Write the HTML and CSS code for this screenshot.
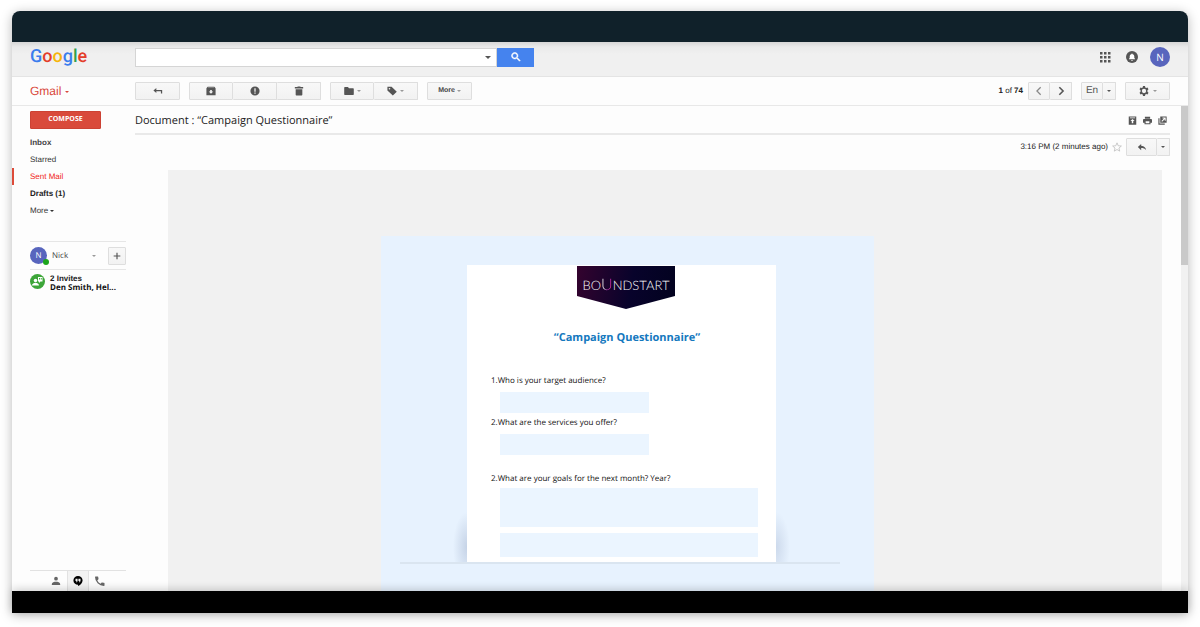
FILE: index.html
```html
<!DOCTYPE html>
<html lang="en">
<head>
<meta charset="utf-8">
<title>Gmail - Campaign Questionnaire</title>
<link rel="stylesheet" href="styles.css">
</head>
<body>
<div class="window">
  <div class="titlebar"></div>
  <header class="header">
    <a class="google" href="#"><span class="g-blue">G</span><span class="g-red">o</span><span class="g-yellow">o</span><span class="g-blue">g</span><span class="g-green">l</span><span class="g-red">e</span></a>
    <form class="search">
      <div class="search-box">
        <input type="text" aria-label="Search mail">
        <button type="button" class="plain" aria-label="Search options"><span class="caret"></span></button>
      </div>
      <button type="button" class="search-go" aria-label="Search"><svg class="icon-l" viewBox="0 0 24 24"><path d="M15.5 14h-.8l-.3-.3A6.500 6.500 0 1 0 13.700 14.400l.3.300v.8l5 5 1.500-1.500zM9.500 14a4.500 4.500 0 1 1 0-9 4.500 4.500 0 0 1 0 9z" stroke="currentColor"/></svg></button>
    </form>
    <div class="account">
      <button type="button" class="plain" aria-label="Apps"><svg class="icon-l" viewBox="0 0 12 12"><path d="M1 1h2.500v2.500H1zM5 1h2.500v2.500H5zM9 1h2.500v2.500H9zM1 5h2.500v2.500H1zM5 5h2.500v2.500H5zM9 5h2.500v2.500H9zM1 9h2.500v2.500H1zM5 9h2.500v2.500H5zM9 9h2.500v2.500H9z"/></svg></button>
      <button type="button" class="plain" aria-label="Notifications"><svg class="icon-l" viewBox="0 0 24 24"><circle cx="12" cy="12" r="12"/><path fill="#fff" d="M12 19.500a1.700 1.700 0 0 0 1.700-1.700h-3.400A1.700 1.700 0 0 0 12 19.500zm6-4-1.400-1.400V11c0-2.300-1.200-4-3.400-4.500V6a1.200 1.200 0 0 0-2.400 0v.5C8.600 7 7.400 8.700 7.400 11v3.100L6 15.500v1.200h12z"/></svg></button>
      <button type="button" class="avatar" aria-label="Account">N</button>
    </div>
  </header>

  <div class="toolbar">
    <a class="gmail" href="#">Gmail <span class="caret caret-small"></span></a>
    <div class="tools">
      <button type="button" class="btn" aria-label="Back"><svg class="icon-m" viewBox="0 0 12 12"><path d="M.5 5.500 4 2.500v2.300h7V9H9.500V6.300H4v2.200z"/></svg></button>
      <div class="group">
        <button type="button" class="btn" aria-label="Archive"><svg class="icon-m" viewBox="0 0 24 24"><path fill-rule="evenodd" d="M4 2h16l3 3.500V22H1V5.500zM10 9.500V13H6.500l5.500 5.500 5.500-5.500H14V9.500zM4.500 5h15l-.8-1H5.300z"/></svg></button>
        <button type="button" class="btn" aria-label="Report spam"><svg class="icon-m" viewBox="0 0 24 24"><path fill-rule="evenodd" d="M12 1a11 11 0 1 0 0 22 11 11 0 0 0 0-22zm-1.500 4.500h3v8h-3zm0 10h3v3h-3z"/></svg></button>
        <button type="button" class="btn" aria-label="Delete"><svg class="icon-m" viewBox="0 0 24 24"><path d="M4 20.500C4 22 5 23 6.500 23h11c1.500 0 2.500-1 2.500-2.500V8H4zM22 2.500h-6L15 1H9L8 2.500H2V6h20z"/></svg></button>
      </div>
      <div class="group">
        <button type="button" class="btn" aria-label="Move to"><svg class="icon-m" viewBox="0 0 24 24"><path d="M9.500 2.500H2C1 2.500.5 3.500.5 4.500v15c0 1 .5 2 1.500 2h20c1 0 1.500-1 1.500-2V7.500c0-1-.5-2-1.500-2H12z"/></svg><span class="caret caret-small caret-pale"></span></button>
        <button type="button" class="btn" aria-label="Labels"><svg class="icon-m" viewBox="0 0 24 24"><path fill-rule="evenodd" d="M1 2v9l13 12 9.500-9L11 2zm5 2.500a2 2 0 1 1 0 4 2 2 0 0 1 0-4z"/></svg><span class="caret caret-small caret-pale"></span></button>
      </div>
      <button type="button" class="btn btn-more">More<span class="caret caret-small caret-pale"></span></button>
    </div>
    <div class="tools tools-right">
      <div class="pager">
        <span class="count"><b>1</b> of <b>74</b></span>
        <div class="group">
          <button type="button" class="btn btn-half" aria-label="Newer"><svg class="icon-m pale" viewBox="0 0 12 12"><path d="M8 1.500 3.500 6 8 10.500" fill="none" stroke="currentColor" stroke-width="1.500"/></svg></button>
          <button type="button" class="btn btn-half" aria-label="Older"><svg class="icon-m" viewBox="0 0 12 12"><path d="M4 1.500 8.500 6 4 10.500" fill="none" stroke="currentColor" stroke-width="1.900"/></svg></button>
        </div>
      </div>
      <div class="group">
        <button type="button" class="btn btn-lang">En</button>
        <button type="button" class="btn btn-drop" aria-label="Input tools"><span class="caret caret-small"></span></button>
      </div>
      <button type="button" class="btn" aria-label="Settings"><svg class="icon-l" viewBox="0 0 24 24"><path fill-rule="evenodd" d="M10 2h4l.6 2.800 1.700 1 2.700-.9 2 3.500L18.900 10.300v3.400l2.100 1.900-2 3.500-2.700-.9-1.700 1L14 22h-4l-.6-2.800-1.700-1-2.700.9-2-3.500 2.100-1.900v-3.400L3 8.400l2-3.500 2.700.9 1.700-1zM12 7.700a4.300 4.300 0 1 0 0 8.600 4.300 4.300 0 0 0 0-8.600z"/></svg><span class="caret caret-small caret-pale"></span></button>
    </div>
  </div>

  <div class="body">
    <aside class="sidebar">
      <button type="button" class="compose">COMPOSE</button>
      <nav class="folders">
        <a class="folder unread" href="#">Inbox</a>
        <a class="folder" href="#">Starred</a>
        <a class="folder current" href="#">Sent Mail</a>
        <a class="folder unread dark" href="#">Drafts (1)</a>
        <a class="folder" href="#">More <span class="caret caret-small"></span></a>
      </nav>
      <div class="person">
        <span class="avatar avatar-small">N<span class="online"></span></span>
        <span class="name">Nick</span>
        <span class="caret caret-small caret-pale"></span>
        <button type="button" class="btn btn-plus" aria-label="New conversation"><svg class="icon-m" viewBox="0 0 12 12"><path d="M5.300 2h1.400v3.300H10v1.400H6.700V10H5.300V6.700H2V5.300h3.300z"/></svg></button>
      </div>
      <a class="invites" href="#">
        <svg class="invite-icon" viewBox="0 0 30 30"><circle cx="15" cy="15" r="15" fill="#3da639"/><g fill="#fff"><circle cx="11" cy="13" r="3.500"/><path d="M4 23c0-4 4-5.500 7-5.500s7 1.500 7 5.500zM16 6h9v9h-4l-3 3v-3h-2z"/></g><path fill="#3da639" d="M18 8h2v3h-2zM21.500 8h2v3h-2z"/></svg>
        <span><b>2 Invites</b><b class="who">Den Smith, Hel...</b></span>
      </a>
      <div class="tabs">
        <button type="button" class="tab" aria-label="Contacts"><svg class="icon-m" viewBox="0 0 24 24"><path d="M12 11a4.500 4.500 0 1 0 0-9 4.500 4.500 0 0 0 0 9zm0 2.500c-4 0-10 1.500-10 5.500v2.500h20V19c0-4-6-5.500-10-5.500z"/></svg></button>
        <button type="button" class="tab tab-on" aria-label="Hangouts"><svg class="icon-m" viewBox="0 0 24 24"><path fill-rule="evenodd" d="M12 0a11 10.500 0 0 0 0 21v3c5-2.500 11-7 11-13.500A11 10.500 0 0 0 12 0zM6 6.500h5V12L9.500 15h-2L8.500 12H6zm7 0h5V12L16.500 15h-2l1-3H13z"/></svg></button>
        <button type="button" class="tab" aria-label="Calls"><svg class="icon-l" viewBox="0 0 24 24"><path d="M6.600 10.800a15 15 0 0 0 6.600 6.600l2.200-2.200c.3-.3.700-.4 1-.2 1.100.4 2.300.6 3.600.6.600 0 1 .4 1 1V21c0 .6-.4 1-1 1A18 18 0 0 1 2 4c0-.6.400-1 1-1h4.500c.6 0 1 .4 1 1 0 1.300.2 2.500.6 3.600.1.300 0 .7-.3 1z"/></svg></button>
      </div>
    </aside>

    <main class="mail">
      <div class="subject">
        <h1>Document : “Campaign Questionnaire”</h1>
        <div class="subject-tools">
          <button type="button" class="plain" aria-label="Collapse"><svg class="icon-s" viewBox="0 0 24 24"><path fill-rule="evenodd" d="M2 1h20v22H2zm3 3v2h14V4zm7 4L6.500 13.500H10V19h4v-5.500h3.500z"/></svg></button>
          <button type="button" class="plain" aria-label="Print"><svg class="icon-s" viewBox="0 0 24 24"><path fill-rule="evenodd" d="M5 2h14v5H5zM3 8h18c1.500 0 3 1 3 2.500V18h-4v4H4v-4H0v-7.500C0 9 1.500 8 3 8zm4 6v5.500h10V14z"/></svg></button>
          <button type="button" class="plain" aria-label="Open in new window"><svg class="icon-s" viewBox="0 0 24 24"><path fill-rule="evenodd" d="M6 1h17v17H6zm6 3v2.500h4L9 13l2 2 7-6.500v4h2.500V4zM1 6h3v14h14v3H1z"/></svg></button>
        </div>
      </div>
      <div class="meta">
        <time>3:16 PM (2 minutes ago)</time>
        <button type="button" class="plain star" aria-label="Star"><svg class="icon-m" viewBox="0 0 24 24"><path fill="none" stroke="currentColor" stroke-width="1.800" d="m12 2 2.900 7 7.600.6-5.800 4.900 1.800 7.400L12 18l-6.500 3.900 1.800-7.400L1.500 9.600 9.100 9z"/></svg></button>
        <div class="group">
          <button type="button" class="btn btn-reply" aria-label="Reply"><svg class="icon-m" viewBox="0 0 24 24"><path d="M10 9V4.500L2 12l8 7.500v-5c5 0 9 1 12 5-1-5.500-4-10-12-10.500z"/></svg></button>
          <button type="button" class="btn btn-drop" aria-label="More actions"><span class="caret caret-small"></span></button>
        </div>
      </div>
      <div class="message">
        <div class="letter">
          <div class="shelf">
            <form class="paper">
              <div class="brand">BO<span class="brand-u">U</span>NDSTART</div>
              <h2>“Campaign Questionnaire”</h2>
              <label for="q1">1.Who is your target audience?</label>
              <input id="q1" class="short" type="text">
              <label for="q2">2.What are the services you offer?</label>
              <input id="q2" class="short" type="text">
              <label for="q3" class="spaced">2.What are your goals for the next month? Year?</label>
              <textarea id="q3" class="long"></textarea>
              <input class="last" type="text" aria-label="Goals for the year">
            </form>
          </div>
        </div>
      </div>
    </main>
    <div class="scrollbar"><div class="thumb"></div></div>
  </div>
  <div class="footbar"></div>
</div>
</body>
</html>
```

FILE: styles.css
```css
* { box-sizing: border-box; }

body {
  margin: 0;
  background: #fff;
  color: #222;
  font: 8px/12px "Liberation Sans", Arial, sans-serif;
  text-rendering: geometricPrecision;
}

a { color: inherit; text-decoration: none; }
button, input, textarea { font: inherit; color: inherit; margin: 0; padding: 0; border: 0; border-radius: 0; outline: 0; text-rendering: inherit; }
button { cursor: pointer; }
svg { display: block; fill: currentColor; flex: none; }
h1, h2 { margin: 0; font-family: "Open Sans", sans-serif; }

.window {
  display: flex;
  flex-direction: column;
  min-height: calc(100vh - 25px);
  margin: 11px 12px 14px;
  border-radius: 8px 8px 0 0;
  background: #fdfdfd;
  box-shadow: 0 2px 12px rgba(0, 0, 0, .28);
}

.titlebar { height: 31px; border-radius: 8px 8px 0 0; background: #10212a; }
.footbar { height: 22px; background: #000; box-shadow: 0 -2px 8px rgba(0, 0, 0, .18); z-index: 1; }

.icon-s { width: 9px; height: 9px; }
.icon-m { width: 10px; height: 10px; }
.icon-l { width: 12px; height: 12px; }
.pale { color: #888; }
.plain { display: flex; align-items: center; background: none; }

.caret {
  display: inline-block;
  border: 3px solid transparent;
  border-top-color: currentColor;
  border-bottom: 0;
}
.caret-small { border-width: 2px; border-bottom: 0; vertical-align: middle; }
.caret-pale { color: #999; }

/* Header */
.header {
  display: flex;
  align-items: center;
  height: 35px;
  padding: 0 18px 4px;
  border-bottom: 1px solid #e4e4e4;
  background: linear-gradient(#d6d6d6, #eaeaea 5px, #f0f0f0 12px);
}
.google { width: 105px; font: 500 18px/24px Roboto, sans-serif; }
.g-blue { color: #3b7ded; }
.g-red { color: #e33e2b; }
.g-yellow { color: #f6b50b; }
.g-green { color: #2ea14e; }

.search { display: flex; flex: 0 1 399px; height: 19px; }
.search-box { display: flex; flex: 1; padding-right: 5px; border: 1px solid #d5d5d5; background: #fff; color: #555; }
.search-box input { flex: 1; min-width: 0; background: none; }
.search-go { display: grid; place-items: center; width: 37px; background: #4583ee; color: #fff; }

.account { display: flex; align-items: center; gap: 15px; margin-left: auto; color: #555; }
.avatar {
  display: grid;
  place-items: center;
  width: 20px;
  height: 20px;
  margin-left: -3px;
  border-radius: 50%;
  background: #5865bd;
  color: #fff;
  font: 10px/12px "Open Sans", sans-serif;
}

/* Toolbar */
.toolbar {
  display: flex;
  align-items: center;
  height: 29px;
  padding: 0 18px;
  border-bottom: 1px solid #e8e8e8;
}
.gmail { width: 105px; color: #d9483b; font-size: 12px; line-height: 16px; }
.tools { display: flex; gap: 9px; }
.tools-right { margin-left: auto; }
.group { display: flex; }
.group .btn + .btn { border-left: 0; }
.btn {
  display: flex;
  align-items: center;
  justify-content: center;
  gap: 3px;
  width: 45px;
  height: 18px;
  border: 1px solid #dedede;
  border-radius: 1px;
  background: linear-gradient(#f8f8f8, #f2f2f2);
  color: #555;
}
.group .btn { width: 44px; }
.btn-more { gap: 2px; color: #444; font-size: 7px; font-weight: bold; }
.pager { display: flex; align-items: center; gap: 5px; }
.group .btn-half { width: 22px; }
.group .btn-lang { width: 22px; font-size: 10px; }
.group .btn-drop { width: 13px; }
.group .btn-reply { width: 31px; }

/* Body */
.body { display: flex; flex: 1; }

.sidebar { display: flex; flex-direction: column; flex: none; width: 123px; padding: 5px 9px 0 18px; }
.compose {
  width: 71px;
  height: 18px;
  border: 1px solid #cc4234;
  border-radius: 1px;
  background: #d94a3b;
  color: #fff;
  font: bold 7px/10px "Open Sans", sans-serif;
}
.folders { margin: 5px 0 22px -18px; }
.folder { display: block; padding-left: 16px; border-left: 2px solid transparent; line-height: 17px; color: #333; }
.unread { font-weight: bold; color: #444; }
.dark { color: #222; }
.current { border-left-color: #dd4b39; color: #f0251b; }

.person {
  display: flex;
  align-items: center;
  height: 29px;
  border: 1px solid #e6e6e6;
  border-width: 1px 0;
}
.avatar-small { position: relative; width: 17px; height: 17px; margin: 0; font-size: 8px; }
.online { position: absolute; right: -2px; bottom: -1px; width: 6px; height: 6px; border-radius: 50%; background: #1ca51c; }
.name { flex: 1; margin-left: 5px; color: #444; font-family: "Open Sans", sans-serif; }
.btn-plus { width: 18px; margin-left: 12px; }

.invites { display: flex; gap: 5px; padding-top: 4px; line-height: 9px; }
.invites b { display: block; white-space: nowrap; }
.invites .who { font-family: "Open Sans", sans-serif; color: #111; }
.invite-icon { width: 15px; height: 15px; }

.tabs { display: flex; justify-content: center; margin-top: auto; border-top: 1px solid #e2e2e2; }
.tab { display: grid; place-items: center; width: 22px; height: 20px; background: none; color: #666; }
.tab-on { border: 1px solid #e2e2e2; border-width: 0 1px; background: #f3f3f3; color: #000; }

.mail { display: flex; flex: 1; flex-direction: column; min-width: 0; padding-right: 11px; }
.subject {
  display: flex;
  align-items: center;
  justify-content: space-between;
  height: 29px;
  padding-top: 2px;
  border-bottom: 2px solid #e9e9e9;
}
.subject h1 { font-size: 11px; font-weight: 400; line-height: 16px; }
.subject-tools { display: flex; gap: 6px; padding-right: 3px; color: #555; }
.meta { display: flex; align-items: center; justify-content: flex-end; gap: 4px; padding-top: 3px; }
.star { color: #bbb; }

.message {
  display: flex;
  flex: 1;
  margin: 14px 8px 0 33px;
  padding: 66px 288px 0 213px;
  background: #f1f1f1;
}
.letter { flex: 1; min-width: 0; padding: 29px 34px 27px 19px; background: #e7f2fe; }
.shelf { padding: 0 64px 0 67px; border-bottom: 2px solid #dae5f0; }
.paper {
  position: relative;
  display: flex;
  flex-direction: column;
  height: 297px;
  padding: 1px 18px 5px 24px;
  background: #fff;
  font: 8px/12px "Open Sans", sans-serif;
  color: #111;
}
.paper::before, .paper::after {
  content: "";
  position: absolute;
  bottom: 0;
  width: 14px;
  height: 50px;
}
.paper::before { right: 100%; background: radial-gradient(ellipse farthest-side at 100% 70%, rgba(110, 130, 170, .28), transparent); }
.paper::after { left: 100%; background: radial-gradient(ellipse farthest-side at 0 70%, rgba(110, 130, 170, .22), transparent); }

.brand {
  align-self: center;
  width: 98px;
  height: 43px;
  margin-left: 3px;
  clip-path: polygon(0 0, 100% 0, 100% 70%, 50% 100%, 0 70%);
  background: linear-gradient(100deg, #34032e, #08032b 55%, #02021f);
  color: #fff;
  font: 300 13px/38px Lato, sans-serif;
  text-align: center;
  white-space: nowrap;
}
.brand-u {
  font-size: 16px;
  background: linear-gradient(100deg, #fff 35%, #c02ac0 60%, #f0435f);
  background-clip: text;
  color: transparent;
}
.paper h2 {
  margin: 21px 0 29px;
  padding-left: 5px;
  color: #1478be;
  font-size: 11px;
  line-height: 16px;
  text-align: center;
}
.paper input, .paper textarea { flex: none; margin-left: 9px; background: #ebf5ff; resize: none; }
.paper .short { width: 149px; height: 21px; margin-top: 5px; margin-bottom: 4px; }
.paper .spaced { margin-top: 14px; }
.paper .long { height: 39px; margin-top: 3px; }
.paper .last { height: 24px; margin-top: 6px; }

.scrollbar { width: 7px; background: #f1f1f1; }
.thumb { height: 159px; background: #c9c9c9; }
```
